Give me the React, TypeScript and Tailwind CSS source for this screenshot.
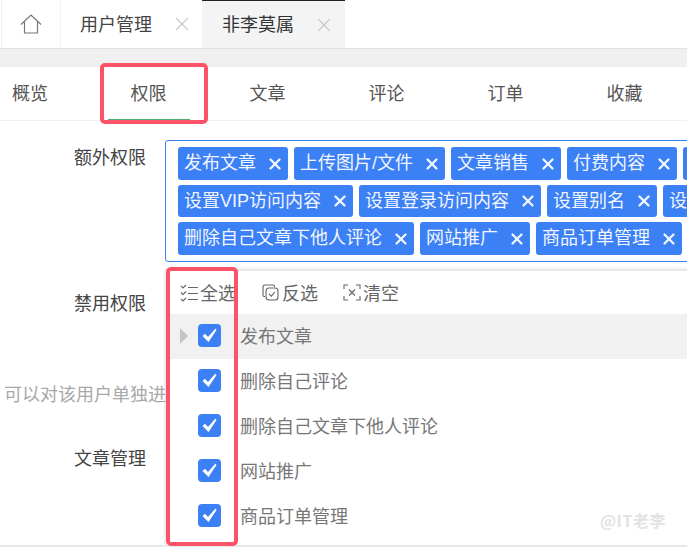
import React from "react"
import { X } from "lucide-react"

const FONT = "font-['Noto_Sans_CJK_SC','Noto_Sans',sans-serif]"

const tagRows = [
    ["发布文章", "上传图片/文件", "文章销售", "付费内容", "设置封面"],
    ["设置VIP访问内容", "设置登录访问内容", "设置别名", "设置置顶"],
    ["删除自己文章下他人评论", "网站推广", "商品订单管理"],
]

const options = ["发布文章", "删除自己评论", "删除自己文章下他人评论", "网站推广", "商品订单管理"]

const tabs = ["权限", "文章", "评论", "订单", "收藏"]

const Tag: React.FC<{ text: string }> = ({ text }) => (
    <span className="flex h-full shrink-0 items-center gap-[10px] whitespace-nowrap rounded-[3px] bg-[#3c80f6] pl-[6px] pr-[4px] font-['Liberation_Sans','Noto_Sans_CJK_SC',sans-serif] text-[18px] text-[#f2f6ff]">
        <span>{text}</span>
        <X size={18} strokeWidth={3} className="shrink-0 text-[#f2f6ff]" />
    </span>
)

const Check = () => (
    <span className="flex h-[23px] w-[23px] items-center justify-center rounded-[4px] bg-[#3c80f6]">
        <svg width="17" height="17" viewBox="0 0 17 17">
            <path d="M1.5 9 L4 6.8 L7 10 L14.5 1.5 L15.5 3 L7.5 15 Z" fill="#fff" />
        </svg>
    </span>
)

const ChecklistIcon = () => (
    <svg width="18" height="18" viewBox="0 0 18 18" fill="none" stroke="#666" strokeWidth="1.1">
        <path d="M1 2 L3 4 L6 1" />
        <path d="M1 8.5 L3 10.5 L6 7.5" />
        <path d="M1 15 L3 17 L6 14" />
        <path d="M8 3.5 H18 M8 9.5 H18 M8 15.5 H18" />
    </svg>
)

const InvertIcon = () => (
    <svg width="17" height="17" viewBox="0 0 17 17" fill="none" stroke="#666" strokeWidth="1.1">
        <path d="M3 12.5 H2.5 A1.5 1.5 0 0 1 1 11 V3 A2 2 0 0 1 3 1 H11 A1.5 1.5 0 0 1 12.5 2.5 V3" />
        <rect x="4" y="4" width="12" height="12" rx="3" />
        <path d="M7 10 L9.3 12.2 L13 8" />
    </svg>
)

const ClearIcon = () => (
    <svg width="18" height="17" viewBox="0 0 18 17" fill="none" stroke="#666" strokeWidth="1.1">
        <path d="M5 1 H1 V5 M13 1 H17 V5 M5 16 H1 V12 M13 16 H17 V12" />
        <path d="M6 5.5 L12 11.5 M12 5.5 L6 11.5" />
    </svg>
)

const Label: React.FC<{ text: string; className: string }> = ({ text, className }) => (
    <div className={`w-[146px] shrink-0 whitespace-nowrap text-right text-[18px] leading-[26px] text-[#444] ${className}`}>{text}</div>
)

export default function App() {
    return (
        <div className={`${FONT} relative h-[547px] w-[687px] overflow-hidden bg-white`}>
            {/* Top tab strip */}
            <div className="flex h-[49px] border-b border-[#e2e2e2] bg-white">
                <div className="ml-[1px] flex w-[60px] items-center justify-center border-x border-[#f2f2f2]">
                    <svg width="22" height="20" viewBox="0 0 22 20" fill="none" stroke="#777" strokeWidth="1.2">
                        <path d="M1 10.5 L11 1 L21 10.5" />
                        <path d="M4.5 8 V19 H17.5 V8" />
                    </svg>
                </div>
                <div className="flex w-[141px] items-center justify-between pl-[19px] pr-[9px] text-[18px] text-[#444]">
                    <span className="pb-[2px]">用户管理</span>
                    <X size={22} strokeWidth={1.2} className="text-[#c8c8c8]" />
                </div>
                <div className="flex w-[143px] items-center justify-between border-t border-[#222] bg-[#f4f4f4] pl-[20px] pr-[10px] text-[18px] text-[#333]">
                    <span className="pb-[2px]">非李莫属</span>
                    <X size={22} strokeWidth={1.2} className="text-[#c8c8c8]" />
                </div>
            </div>
            <div className="h-[18px] bg-[#f0f0f0]" />

            {/* Section tabs */}
            <div className="flex h-[54px] border-b border-[#f0f0f0] pb-[3px] text-[18px] text-[#555]">
                <div className="flex w-[89px] items-center pl-[12px]">概览</div>
                {tabs.map((t) => (
                    <div key={t} className="relative flex w-[119px] items-center justify-center">
                        {t}
                        {t === "权限" && <span className="absolute bottom-[-4px] left-[19px] h-[2px] w-[82px] bg-[#4caf72]" />}
                    </div>
                ))}
            </div>

            {/* Form rows, the dropdown covers most of them */}
            <div className="flex pt-[19px]">
                <Label text="额外权限" className="pt-[3px]" />
                <div className="ml-[19px] flex h-[122px] w-[600px] shrink-0 flex-col gap-[5px] overflow-hidden rounded-[3px] border border-[#3c80f6] pl-[12px] pt-[6px]">
                    {tagRows.map((row, i) => (
                        <div key={i} className={`flex gap-[6px] ${i === 1 ? "h-[32px]" : "h-[33px]"}`}>
                            {row.map((t) => (
                                <Tag key={t} text={t} />
                            ))}
                        </div>
                    ))}
                </div>
            </div>
            <Label text="禁用权限" className="mt-[27px]" />
            <div className="ml-[4px] mt-[65px] whitespace-nowrap text-[18px] leading-[26px] text-[#a8a8a8]">可以对该用户单独进行权限设置</div>
            <Label text="文章管理" className="mt-[38px]" />

            {/* Dropdown panel */}
            <div className="absolute left-[166px] top-[270px] h-[275px] w-[540px] border-t border-[#e6e6e6] bg-white shadow-[0_0_4px_rgba(0,0,0,0.2)]">
                <div className="flex h-[43px] items-center text-[18px] text-[#666]">
                    <div className="ml-[14px] flex w-[82px] items-center gap-[2px]">
                        <ChecklistIcon />
                        全选
                    </div>
                    <div className="flex w-[81px] items-center gap-[3px]">
                        <InvertIcon />
                        反选
                    </div>
                    <div className="flex items-center gap-[2px]">
                        <ClearIcon />
                        清空
                    </div>
                </div>
                {options.map((o, i) => (
                    <div key={o} className={`relative flex h-[45px] items-center pb-[2px] pl-[32px] text-[18px] text-[#777] ${i === 0 ? "bg-[#f1f1f1]" : ""}`}>
                        {i === 0 && (
                            <span className="absolute left-[14px] h-0 w-0 border-y-[8px] border-l-[8px] border-y-transparent border-l-[#c4c4c4]" />
                        )}
                        <Check />
                        <span className="ml-[19px]">{o}</span>
                    </div>
                ))}
            </div>

            <div className="absolute bottom-0 left-0 h-[2px] w-full bg-[#e8e8e8]" />

            {/* Red annotation boxes */}
            <div className="absolute left-[100px] top-[63px] h-[61px] w-[108px] rounded-[5px] border-[4px] border-[#fd5268]" />
            <div className="absolute left-[166px] top-[267px] h-[279px] w-[72px] rounded-[5px] border-[4px] border-[#fd5268]" />

            <div className="absolute left-[600px] top-[510px] text-[16px] font-bold leading-[20px] tracking-[0.5px] text-[#e2e2e2]">@IT老李</div>
        </div>
    )
}
